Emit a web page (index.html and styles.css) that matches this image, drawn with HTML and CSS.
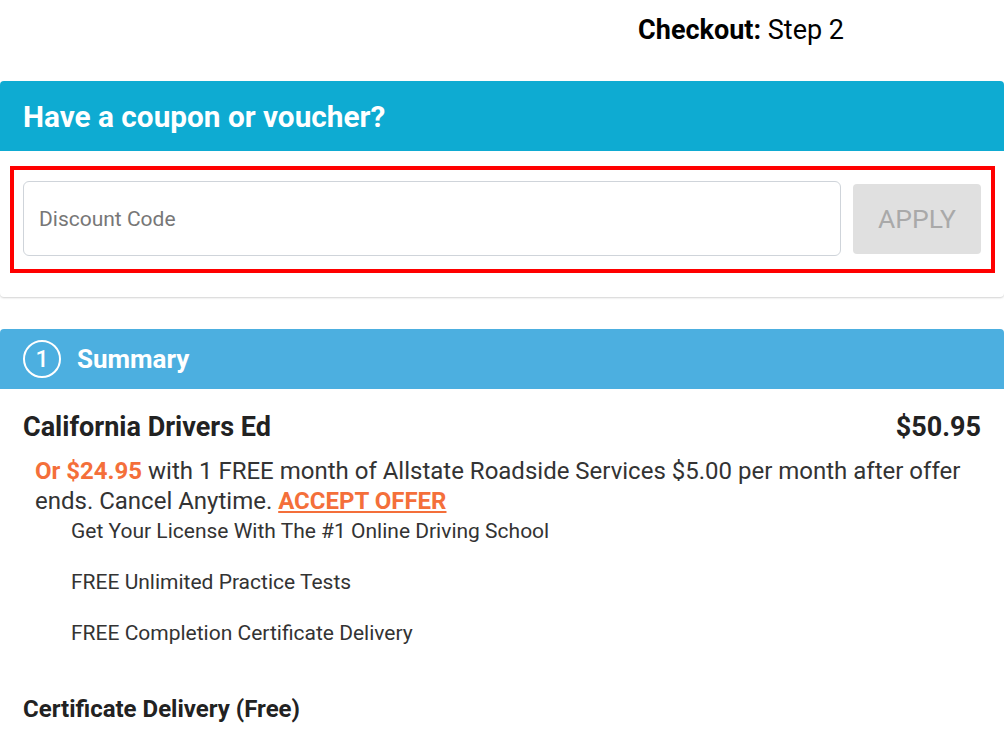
FILE: index.html
```html
<!DOCTYPE html>
<html lang="en">
<head>
  <meta charset="UTF-8" />
  <meta name="viewport" content="width=device-width, initial-scale=1.0" />
  <title>Checkout</title>
  <link rel="stylesheet" href="styles.css">
</head>
<body>
  <div class="checkout-step"><strong>Checkout:</strong> Step 2</div>

  <div class="card coupon-card">
    <h2 class="card-header coupon-header">Have a coupon or voucher?</h2>
    <div class="coupon-body">
      <div class="coupon-form">
        <input type="text" class="coupon-input" placeholder="Discount Code" />
        <button class="apply-btn">APPLY</button>
      </div>
    </div>
  </div>

  <div class="card summary-card">
    <h2 class="card-header summary-header">
      <span class="step-num">1</span>
      Summary
    </h2>
    <div class="summary-body">
      <div class="item-row">
        <span class="item-name">California Drivers Ed</span>
        <span class="item-price">$50.95</span>
      </div>
      <p class="offer">
        <strong class="orange">Or $24.95</strong> with 1 FREE month of Allstate Roadside Services $5.00 per month after offer ends. Cancel Anytime. <a href="#" class="accept">ACCEPT OFFER</a>
      </p>
      <ul class="features">
        <li>Get Your License With The #1 Online Driving School</li>
        <li>FREE Unlimited Practice Tests</li>
        <li>FREE Completion Certificate Delivery</li>
      </ul>
      <div class="item-row">
        <span class="item-name sub">Certificate Delivery (Free)</span>
      </div>
    </div>
  </div>
</body>
</html>
```

FILE: styles.css
```css
body {
  font-family: Roboto, 'Liberation Sans', sans-serif;
  margin: 0;
  background: #fff;
  color: #222;
}
.checkout-step {
  font-size: 27px;
  line-height: 32px;
  padding: 14px 160px 0 0;
  text-align: right;
  height: 67px;
  color: #000;
}
.card {
  background: white;
  border-radius: 4px;
}
.coupon-card {
  box-shadow: 0 1px 2px rgba(0, 0, 0, 0.18);
  margin-bottom: 32px;
}
.card-header {
  margin: 0;
  color: white;
  font-weight: 700;
  padding-left: 23px;
  border-radius: 4px 4px 0 0;
}
.coupon-header {
  background: #0eabd2;
  font-size: 29.75px;
  line-height: 72px;
  height: 70px;
}
.coupon-body {
  padding: 15px 9px 24px 10px;
}
.coupon-form {
  display: flex;
  align-items: center;
  gap: 12px;
  border: 4px solid #ff0000;
  padding: 11px 10px 13px 9px;
}
.coupon-input {
  flex: 1;
  height: 75px;
  box-sizing: border-box;
  border: 1px solid #cfd4da;
  border-radius: 6px;
  padding: 0 15px;
  font-family: inherit;
  font-size: 21px;
  color: #333;
}
.coupon-input::placeholder {
  color: #777;
}
.apply-btn {
  width: 128px;
  height: 70px;
  border: none;
  border-radius: 4px;
  background: #e0e0e0;
  color: #a9a9a9;
  font-family: inherit;
  font-size: 26.5px;
}
.summary-header {
  background: #4cafe0;
  font-size: 26px;
  line-height: 60px;
  display: flex;
  align-items: center;
  gap: 16px;
}
.step-num {
  width: 34px;
  height: 34px;
  border: 2px solid white;
  border-radius: 50%;
  display: flex;
  align-items: center;
  justify-content: center;
  font-size: 23px;
  font-weight: 500;
  line-height: 1;
}
.summary-body {
  padding: 22px 23px 0 23px;
}
.item-row {
  display: flex;
  justify-content: space-between;
  font-size: 27px;
  font-weight: 700;
  line-height: 32px;
}
.item-name.sub {
  font-size: 24px;
}
.offer {
  margin: 13px 0 0 12px;
  font-size: 24px;
  line-height: 30px;
  color: #333;
}
.orange {
  color: #f46f3a;
}
.accept {
  color: #f46f3a;
  font-weight: 700;
}
.features {
  list-style: none;
  margin: 0 0 45px 0;
  padding: 0 0 0 48px;
  font-size: 21px;
  color: #333;
}
.features li {
  line-height: 30px;
  margin-bottom: 21px;
}
```
